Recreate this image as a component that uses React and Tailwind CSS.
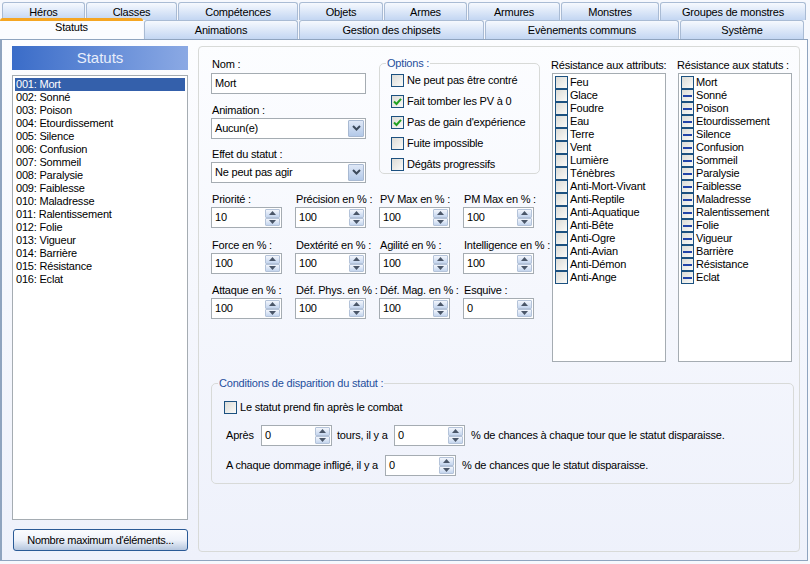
const row1 = [["Héros",83],["Classes",91],["Compétences",120],["Objets",84],["Armes",83],["Armures",92],["Monstres",98],["Groupes de monstres",146]];
const row2 = [["Animations",154],["Gestion des chipsets",185],["Evènements communs",194],["Système",124]];
const statuts = ["Mort","Sonné","Poison","Etourdissement","Silence","Confusion","Sommeil","Paralysie","Faiblesse","Maladresse","Ralentissement","Folie","Vigueur","Barrière","Résistance","Eclat"];
const attributs = ["Feu","Glace","Foudre","Eau","Terre","Vent","Lumière","Ténèbres","Anti-Mort-Vivant","Anti-Reptile","Anti-Aquatique","Anti-Bête","Anti-Ogre","Anti-Avian","Anti-Démon","Anti-Ange"];
const spins = [
  [["Priorité :","10"],["Précision en % :","100"],["PV Max en % :","100"],["PM Max en % :","100"]],
  [["Force en % :","100"],["Dextérité en % :","100"],["Agilité en % :","100"],["Intelligence en % :","100"]],
  [["Attaque en % :","100"],["Déf. Phys. en % :","100"],["Déf. Mag. en % :","100"],["Esquive :","0"]],
];

function Tab({ label, width }) {
  return (
    <div style={{ width }} className="h-full shrink-0 flex items-center justify-center pt-px rounded-t-[3px] border border-b-0 border-[#a9bbd4] bg-gradient-to-b from-[#f6f9fe] to-[#c3d6f2] whitespace-nowrap">
      {label}
    </div>
  );
}

function Check({ state }) {
  return (
    <span className="w-[13px] h-[13px] shrink-0 flex items-center justify-center border border-[#1c5180] bg-gradient-to-br from-[#dcdcd7] to-[#fafaf8]">
      {state === "on" && (
        <svg width="9" height="9" viewBox="0 0 9 9"><path d="M1 4.5 L3.5 7 L8 1.8" fill="none" stroke="#21a121" strokeWidth="2" /></svg>
      )}
      {state === "mixed" && <span className="w-[9px] h-[2px] bg-[#2144a8]" />}
    </span>
  );
}

function Option({ state, children }) {
  return (
    <div className="h-[21px] flex items-center gap-[3px]">
      <Check state={state} />
      <span className="whitespace-nowrap">{children}</span>
    </div>
  );
}

function Arrow({ up }) {
  return (
    <svg width="7" height="4" viewBox="0 0 7 4"><path d={up ? "M3.5 0 L7 4 L0 4 Z" : "M0 0 L7 0 L3.5 4 Z"} fill="#4a5668" /></svg>
  );
}

function SpinButton({ up }) {
  return (
    <span className="flex-1 flex items-center justify-center border border-[#b4c3d9] rounded-[1px] bg-gradient-to-b from-[#f3f6fc] to-[#c4d5ee]">
      <Arrow up={up} />
    </span>
  );
}

function Spin({ value }) {
  return (
    <div className="w-[71px] h-[21px] shrink-0 flex justify-between border border-[#a5acb2] bg-white pl-[3px] p-px">
      <span className="self-center">{value}</span>
      <span className="w-[15px] flex flex-col">
        <SpinButton up />
        <SpinButton />
      </span>
    </div>
  );
}

function Select({ value }) {
  return (
    <div className="h-[21px] w-[155px] flex justify-between border border-[#a5acb2] bg-white pl-[3px] p-px">
      <span className="self-center">{value}</span>
      <span className="w-[16px] flex items-center justify-center rounded-[1px] border border-[#a8b9d2] bg-gradient-to-b from-[#dfe8f7] to-[#b3c9e8]">
        <svg width="9" height="7" viewBox="0 0 9 7"><path d="M1 1 L4.5 4.5 L8 1" fill="none" stroke="#3c4a5c" strokeWidth="2" /></svg>
      </span>
    </div>
  );
}

function Resist({ title, items, mixed }) {
  return (
    <div className="w-[114px] shrink-0">
      <div className="h-[15px] whitespace-nowrap -ml-px pt-px">{title}</div>
      <div className="h-[289px] border border-[#a5acb2] bg-white px-[2px] pt-[2px] overflow-hidden">
        {items.map((it, i) => (
          <div key={it} className="h-[13px] flex items-center gap-[2px]">
            <Check state={mixed && i > 0 ? "mixed" : "off"} />
            <span className="whitespace-nowrap">{it}</span>
          </div>
        ))}
      </div>
    </div>
  );
}

export default function App() {
  return (
    <div className="w-[810px] h-[564px] overflow-hidden bg-[#f6f8fd] text-[11px] leading-[13px] tracking-[-0.2px] text-black pt-[2px]" style={{ fontFamily: '"Liberation Sans", Arial, sans-serif' }}>
      <div className="h-[18px] flex gap-[1px] pl-[2px]">
        {row1.map(([l, w]) => <Tab key={l} label={l} width={w} />)}
      </div>
      <div className="h-[19px] flex gap-[1px] items-stretch">
        <div className="w-[143px] h-[21px] z-10 shrink-0 -mt-[2px] pb-[5px] flex items-center justify-center rounded-t-[3px] border-t-[3px] border-[#f5a623] bg-[#fbfcff]">Statuts</div>
        {row2.map(([l, w]) => <Tab key={l} label={l} width={w} />)}
      </div>
      <div className="w-[808px] h-[522px] border border-[#8fa4bf] border-l-[2px] bg-gradient-to-b from-[#fcfdff] to-[#eef1fb] flex pl-[10px] pt-[6px] gap-[10px]">
        <div className="w-[176px] shrink-0 flex flex-col">
          <div className="h-[24px] pb-px flex items-center justify-center bg-gradient-to-r from-[#3a6cc8] to-[#8ba9e4] text-[#e8eefb] text-[15px] tracking-normal">Statuts</div>
          <div className="h-[445px] mt-[5px] border border-[#a5acb2] bg-white p-[2px]">
            {statuts.map((s, i) => (
              <div key={s} className={`h-[13px] flex items-center pl-[1px] whitespace-pre ${i === 0 ? "bg-[#3460ab] text-white" : ""}`}>
                {String(i + 1).padStart(3, "0")}: {s}
              </div>
            ))}
          </div>
          <div className="h-[22px] mt-[9px] ml-[1px] flex items-center justify-center rounded-[3px] border border-[#2a5a96] bg-gradient-to-b from-[#fbfcfe] via-[#eef2fa] to-[#b5c6de] tracking-[-0.3px]">Nombre maximum d'éléments...</div>
        </div>

        <div className="w-[602px] h-[506px] shrink-0 rounded-[4px] border border-[#d8dad8] pl-[12px] pr-[5px] pt-[11px]">
          <div className="flex">
            <div className="w-[327px] shrink-0">
              <div className="flex gap-[13px]">
                <div className="w-[155px] shrink-0">
                  <div className="h-[15px] ml-px">Nom :</div>
                  <div className="h-[21px] border border-[#a5acb2] bg-white pl-[3px] flex items-center">Mort</div>
                  <div className="h-[24px] pt-[10px] ml-px">Animation :</div>
                  <Select value="Aucun(e)" />
                  <div className="h-[23px] pt-[9px] ml-px">Effet du statut :</div>
                  <Select value="Ne peut pas agir" />
                </div>
                <fieldset className="w-[161px] h-[117px] shrink-0 -mt-[1px] rounded-[5px] border border-[#d8dad8] pl-[11px]">
                  <legend className="px-[1px] -ml-[5px] text-[#1f4f9c]">Options :</legend>
                  <Option>Ne peut pas être contré</Option>
                  <Option state="on">Fait tomber les PV à 0</Option>
                  <Option state="on">Pas de gain d'expérience</Option>
                  <Option>Fuite impossible</Option>
                  <Option>Dégâts progressifs</Option>
                </fieldset>
              </div>
              <div className="mt-[10px] flex flex-col w-[340px]">
                {spins.map((row, r) => (
                  <div key={r} className={`grid grid-cols-[84px_84px_84px_84px] ${r === 0 ? "mb-[11px]" : "mb-[10px]"}`}>
                    {row.map(([l, v]) => (
                      <div key={l}>
                        <div className="h-[14px] whitespace-nowrap ml-px">{l}</div>
                        <Spin value={v} />
                      </div>
                    ))}
                  </div>
                ))}
              </div>
            </div>
            <div className="ml-[14px] flex gap-[12px]">
              <Resist title="Résistance aux attributs:" items={attributs} />
              <Resist title="Résistance aux statuts :" items={statuts} mixed />
            </div>
          </div>

          <fieldset className="h-[107px] mt-[15px] rounded-[5px] border border-[#d8dad8] pl-[12px]">
            <legend className="px-[1px] -ml-[6px] text-[#1f4f9c]">Conditions de disparition du statut :</legend>
            <div className="h-[14px] mt-[10px] flex items-center gap-[3px]"><Check /><span>Le statut prend fin après le combat</span></div>
            <div className="mt-[11px] pl-[2px] flex items-center">
              <span className="w-[35px]">Après</span>
              <Spin value="0" />
              <span className="w-[62px] pl-[5px]">tours, il y a</span>
              <Spin value="0" />
              <span className="pl-[6px] whitespace-nowrap">% de chances à chaque tour que le statut disparaisse.</span>
            </div>
            <div className="mt-[9px] pl-[2px] flex items-center">
              <span className="w-[159px] whitespace-nowrap">A chaque dommage infligé, il y a</span>
              <Spin value="0" />
              <span className="pl-[6px] whitespace-nowrap">% de chances que le statut disparaisse.</span>
            </div>
          </fieldset>
        </div>
      </div>
    </div>
  );
}
